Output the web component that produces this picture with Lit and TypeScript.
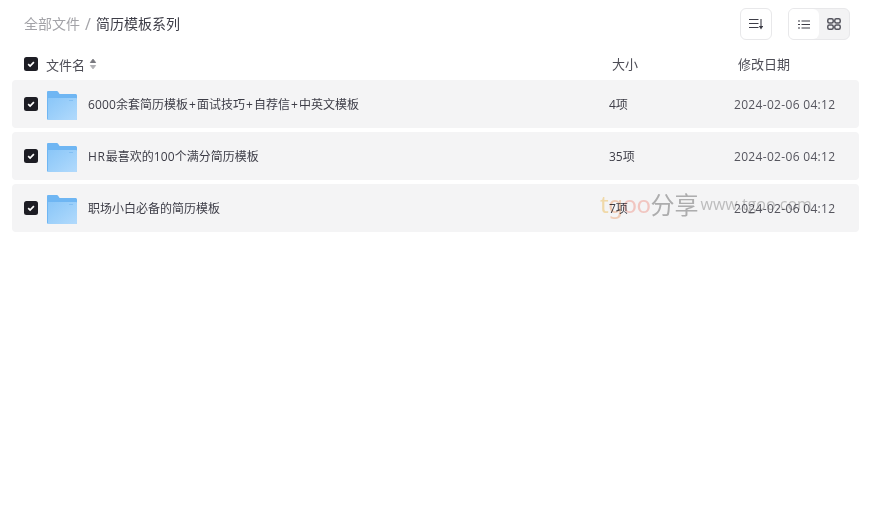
import { LitElement, html, css, svg } from "lit";
import { customElement } from "lit/decorators.js";

const rows = [
  { name: "6000余套简历模板+面试技巧+自荐信+中英文模板", size: "4项" },
  { name: "HR最喜欢的100个满分简历模板", size: "35项" },
  { name: "职场小白必备的简历模板", size: "7项" },
];

// The reference's Latin glyphs run wider than Open Sans, so spacing is set per run.
const runs = (s: string) =>
  s.split(/(\+|[A-Za-z]+|[0-9]+)/).filter(Boolean).map((p) => {
    if (p === "+") return html`<span class="plus">${p}</span>`;
    if (/^[A-Za-z]/.test(p)) return html`<span class="alpha">${p}</span>`;
    if (/^[0-9]/.test(p)) return html`<span class="num">${p}</span>`;
    return p;
  });

const check = html`<span class="check"><svg viewBox="0 0 14 14" width="14" height="14"><path d="M4.200 7.200l1.900 1.900L9.900 5.200" fill="none" stroke="#fff" stroke-width="1.700"/></svg></span>`;

const folder = svg`<svg class="folder" viewBox="0 0 30 29" width="30" height="29">
  <defs><linearGradient id="fg" x1="0" y1="0" x2="1" y2="1"><stop offset="0" stop-color="#8ac6f8"/><stop offset=".5" stop-color="#9dd0fa"/><stop offset="1" stop-color="#b2daFc"/></linearGradient></defs>
  <path d="M0 1.200C0 .5.500 0 1.200 0h8.600c.6 0 1 .3 1.300.7L12.600 3H28.500C29.300 3 30 3.700 30 4.500V27.500c0 .8-.7 1.500-1.500 1.500H1.500C.7 29 0 28.300 0 27.500z" fill="#6fb6f3"/>
  <path d="M1 7h28.200c.4 0 .8.400.8.800V27.500c0 .8-.7 1.500-1.500 1.500H1z" fill="url(#fg)"/>
  <rect x="22" y="9" width="4" height="1" fill="#83bff3"/>
</svg>`;

@customElement("app-root")
export class AppRoot extends LitElement {
  static styles = css`
    :host { display: block; width: 874px; height: 514px; position: relative; background: #fff; overflow: hidden;
      font-family: "Open Sans", "Noto Sans CJK SC", sans-serif; color: #3d3d47; }
    .top { display: flex; align-items: center; height: 32px; padding: 8px 24px 0 24px; justify-content: space-between; }
    .crumbs { display: flex; align-items: center; font-size: 14px; line-height: 32px; }
    .crumbs .root { color: #a3a3a8; }
    .crumbs .sep { color: #a3a3a8; font-size: 16px; width: 16px; text-align: center; }
    .crumbs .cur { color: #3d3d47; }
    .tools { display: flex; gap: 16px; }
    .btn { box-sizing: border-box; width: 32px; height: 32px; border: 1px solid #e8e8ea; border-radius: 6px; display: flex; align-items: center; justify-content: center; }
    .seg { box-sizing: border-box; width: 62px; height: 32px; border: 1px solid #e8e8ea; border-radius: 6px; display: flex; overflow: hidden; background: #f3f3f4; }
    .seg span { flex: 1; display: flex; align-items: center; justify-content: center; }
    .seg .on { background: #fff; border-radius: 0 6px 6px 0; }
    .head { box-sizing: border-box; display: grid; grid-template-columns: 600px 126px 1fr; height: 40px; padding: 6px 12px 0; align-items: center; font-size: 13px; color: #4d4d56; }
    .head .nm { display: flex; align-items: center; padding: 2px 0 0 12px; }
    .head .nm .lbl { margin-left: 8px; }
    .sort { margin-left: 4px; display: block; }
    .list { display: flex; flex-direction: column; gap: 4px; padding: 0 15px 0 12px; }
    .row { display: grid; grid-template-columns: 597px 125px 1fr; height: 48px; align-items: center; background: #f4f4f5; border-radius: 4px; font-size: 12px; color: #3d3d47; }
    .row .nm { display: flex; align-items: center; padding-left: 12px; }
    .num { letter-spacing: .15px; }
    .alpha { letter-spacing: .7px; }
    .plus { padding: 0 1.050px; }
    .folder { margin: 2px 11px 0 9px; display: block; }
    .check { width: 14px; height: 14px; background: #1d1d24; border-radius: 2.500px; display: block; flex: none; }
    .check svg { display: block; }
    .date { color: #55555e; letter-spacing: .32px; }
    .mark { position: absolute; left: 600px; top: 186px; display: flex; align-items: center; white-space: nowrap; pointer-events: none; mix-blend-mode: multiply; }
    .mark .t { font-size: 24px; font-family: "Noto Sans", sans-serif; letter-spacing: -.5px; }
    .t1 { color: #fbe3b0; } .t2 { color: #fbd4bc; } .t3 { color: #fccfc9; }
    .mark .zh { font-size: 24px; color: #b5b5b5; }
    .mark .url { font-size: 16px; color: #c6c6c6; margin-left: 2px; }
  `;
  render() {
    return html`
      <div class="top">
        <div class="crumbs"><span class="root">全部文件</span><span class="sep">/</span><span class="cur">简历模板系列</span></div>
        <div class="tools">
          <div class="btn"><svg width="14" height="12" viewBox="0 0 14 12"><path d="M0 1.500h9.500M0 5.500h9.500M0 9.500h9.500" stroke="#3d3d47" stroke-width="1.200"/><path d="M12 1v8" stroke="#3d3d47" stroke-width="1.100" fill="none"/><path d="M9.800 8h4.400L12 11.500z" fill="#3d3d47"/></svg></div>
          <div class="seg">
            <span class="on"><svg width="12" height="9" viewBox="0 0 12 9"><path d="M0 1h2M3.500 1H12M0 4.500h2M3.500 4.500H12M0 8h2M3.500 8H12" stroke="#3d3d47" stroke-width="1.200"/></svg></span>
            <span><svg width="14" height="12" viewBox="0 0 14 12"><g fill="none" stroke="#55555e" stroke-width="1.500"><rect x=".8" y=".8" width="5.400" height="4.200" rx="1.500"/><rect x="7.800" y=".8" width="5.400" height="4.200" rx="1.500"/><rect x=".8" y="7" width="5.400" height="4.200" rx="1.500"/><rect x="7.800" y="7" width="5.400" height="4.200" rx="1.500"/></g></svg></span>
          </div>
        </div>
      </div>
      <div class="head">
        <div class="nm">${check}<span class="lbl">文件名</span>
          <svg class="sort" width="8" height="12" viewBox="0 0 8 12"><path d="M4 1.200l2.600 3.300H1.400z" fill="#77777d" stroke="#77777d" stroke-linejoin="round"/><path d="M4 10.800l2.600-3.300H1.400z" fill="#b0b0b4" stroke="#b0b0b4" stroke-linejoin="round"/></svg></div>
        <div>大小</div><div>修改日期</div>
      </div>
      <div class="list">
        ${rows.map((r) => html`<div class="row"><div class="nm">${check}${folder}<span>${runs(r.name)}</span></div><div>${r.size}</div><div class="date">2024-02-06 04:12</div></div>`)}
      </div>
      <div class="mark"><span class="t"><span class="t1">t</span><span class="t2">g</span><span class="t3">oo</span></span><span class="zh">分享</span><span class="url">www.tgoo.com</span></div>
    `;
  }
}
